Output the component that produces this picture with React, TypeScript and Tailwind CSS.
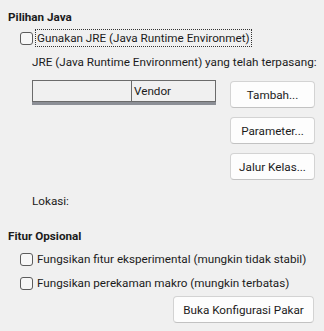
import React from "react";

const font = { fontFamily: 'Roboto, "Noto Sans", sans-serif' };

function Box() {
  return <span className="inline-block w-[13px] h-[13px] rounded-[3px] border border-[#5c5c5c] bg-[#f7f7f7] shrink-0" />;
}

function Btn({ children, className = "" }: { children: React.ReactNode; className?: string }) {
  return (
    <div className={"flex items-center justify-center h-[27px] rounded-[4px] border border-[#d3d3d3] border-b-[#c2c2c2] bg-[#fdfdfd] text-[11.7px] text-[#1b1b1b] whitespace-nowrap " + className}>
      {children}
    </div>
  );
}

export default function App() {
  return (
    <div className="w-[324px] h-[331px] bg-[#f0f0f0] text-[#1b1b1b] text-[11.7px] leading-[16px] overflow-hidden whitespace-nowrap" style={font}>
      <div className="pl-[8px] pt-[9px] font-bold h-[16px] box-content">Pilihan Java</div>
      <div className="flex items-center pl-[20px] mt-[5px] h-[16px]">
        <Box />
        <span className="ml-[2px] px-[1px] border border-dotted border-[#333]">Gunakan JRE (Java Runtime Environmet)</span>
      </div>
      <div className="pl-[32px] mt-[8px]">JRE (Java Runtime Environment) yang telah terpasang:</div>
      <div className="flex pl-[32px] mt-[10px]">
        <div className="w-[184px]">
          <div className="flex h-[22px] border border-[#6b6b6b]">
            <div className="w-[99px] border-r border-[#6b6b6b]" />
            <div className="pl-[2px] flex items-center">Vendor</div>
          </div>
          <div className="h-[3px] bg-[#8c8f96]" />
        </div>
        <div className="ml-[14px] w-[85px] flex flex-col gap-[9px] mt-[1px]">
          <Btn>Tambah...</Btn>
          <Btn>Parameter...</Btn>
          <Btn>Jalur Kelas...</Btn>
        </div>
      </div>
      <div className="pl-[32px] mt-[13px]">Lokasi:</div>
      <div className="pl-[8px] mt-[19px] font-bold">Fitur Opsional</div>
      <div className="flex items-center pl-[20px] mt-[3px] h-[24px]">
        <Box />
        <span className="ml-[4px]">Fungsikan fitur eksperimental (mungkin tidak stabil)</span>
      </div>
      <div className="flex items-center pl-[20px] h-[24px]">
        <Box />
        <span className="ml-[4px]">Fungsikan perekaman makro (mungkin terbatas)</span>
      </div>
      <div className="flex justify-end pr-[10px] mt-[1px]">
        <Btn className="w-[141px]">Buka Konfigurasi Pakar</Btn>
      </div>
    </div>
  );
}
